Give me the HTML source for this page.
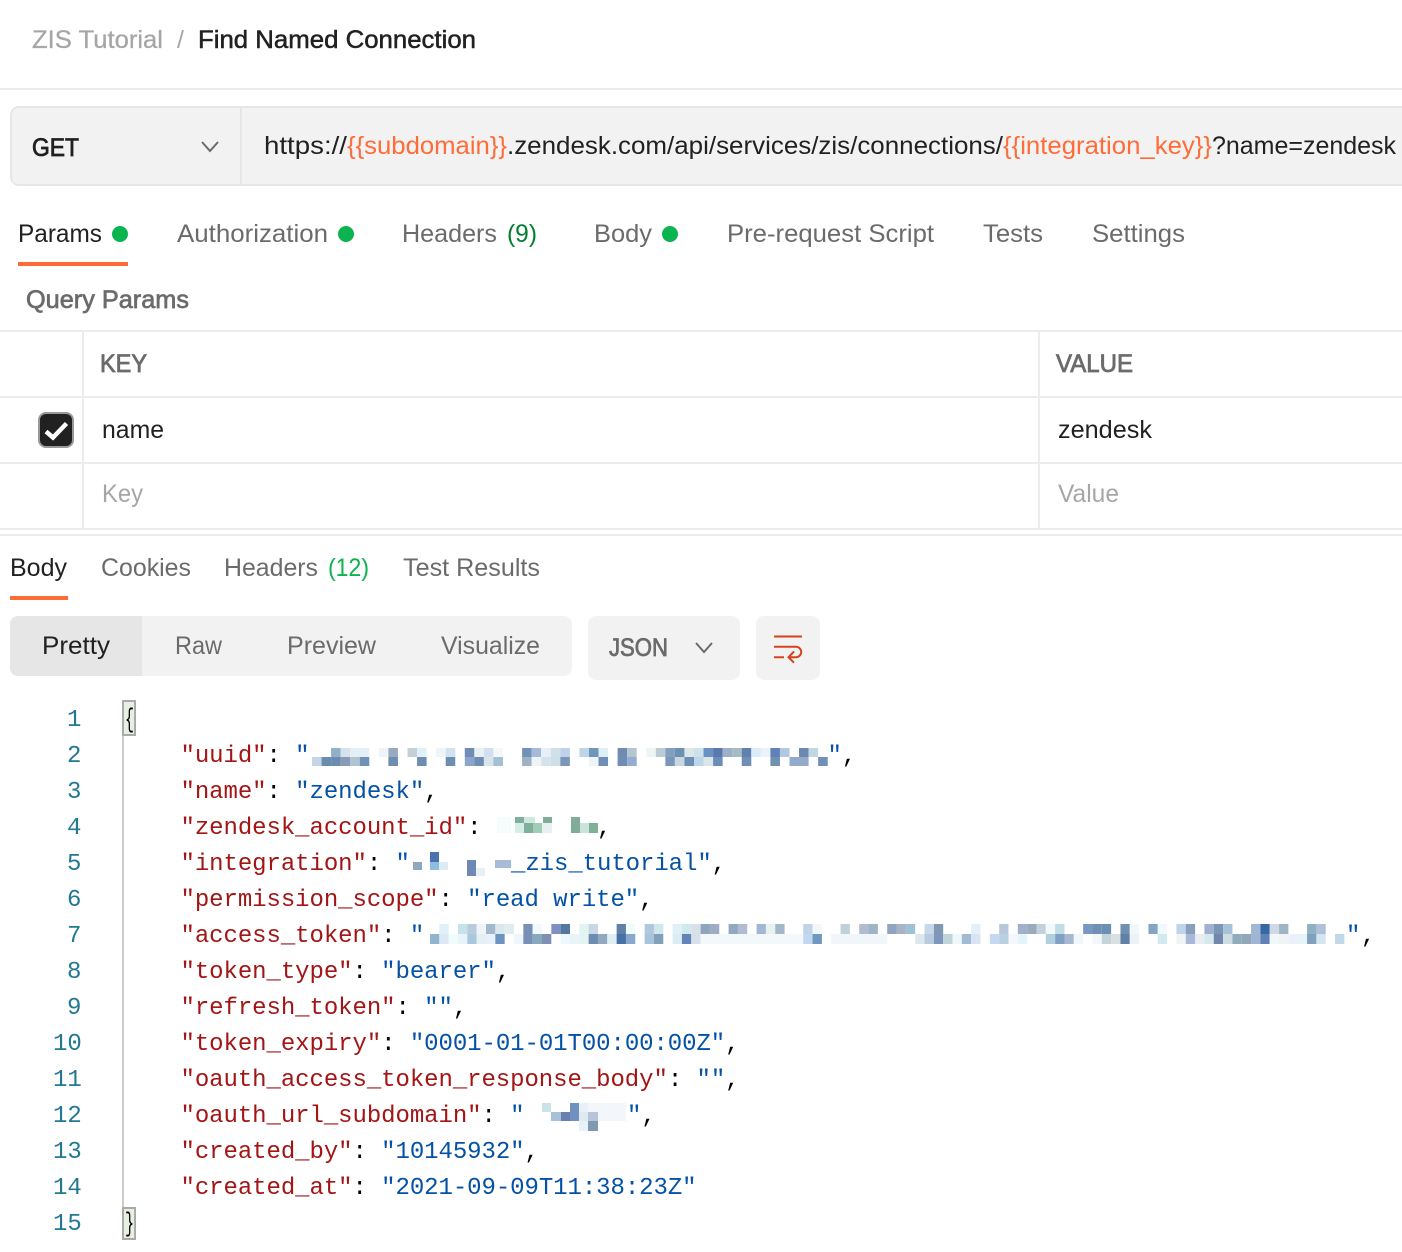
<!DOCTYPE html>
<html><head><meta charset="utf-8"><style>
html,body{margin:0;padding:0;background:#fff;width:1402px;height:1252px;overflow:hidden}
svg{display:block}
.s{font-family:"Liberation Sans",sans-serif;font-size:25px;fill:#6b6b6b}
.d{fill:#212121}
.m{font-family:"Liberation Mono",monospace;font-size:24px;white-space:pre;fill:#000;letter-spacing:-.07px}
.n{fill:#237893}
.k{fill:#a31515}
.v{fill:#0451a5}
.o{fill:#ff6c37}
</style></head><body>
<svg width="1402" height="1252" viewBox="0 0 1402 1252" xmlns="http://www.w3.org/2000/svg">
<rect width="1402" height="1252" fill="#fff"/>
<text class="s" x="32" y="48" textLength="131" lengthAdjust="spacingAndGlyphs" style="fill:#a6a6a6" stroke="#a6a6a6" stroke-width=".3">ZIS Tutorial</text>
<text class="s" x="177" y="48" style="fill:#a6a6a6">/</text>
<text class="s d" x="198" y="48" textLength="278" lengthAdjust="spacingAndGlyphs" stroke="#212121" stroke-width=".5">Find Named Connection</text>
<rect y="88" width="1402" height="2" fill="#ececec"/>

<rect x="11" y="107" width="1420" height="78" rx="8" fill="#f2f2f2" stroke="#e6e6e6" stroke-width="2"/>
<rect x="240" y="107" width="2" height="78" fill="#e6e6e6"/>
<text class="s d" x="32" y="156" textLength="47" lengthAdjust="spacingAndGlyphs" stroke="#212121" stroke-width=".8">GET</text>
<path d="M202 142l8 9 8-9" fill="none" stroke="#6b6b6b" stroke-width="2"/>
<text class="s d" x="264" y="154" textLength="83" lengthAdjust="spacingAndGlyphs">https://</text>
<text class="s o" x="347" y="154" textLength="160" lengthAdjust="spacingAndGlyphs">{{subdomain}}</text>
<text class="s d" x="507" y="154" textLength="496" lengthAdjust="spacingAndGlyphs">.zendesk.com/api/services/zis/connections/</text>
<text class="s o" x="1003" y="154" textLength="209" lengthAdjust="spacingAndGlyphs">{{integration_key}}</text>
<text class="s d" x="1212" y="154" textLength="184" lengthAdjust="spacingAndGlyphs">?name=zendesk</text>

<text class="s d" x="18" y="242" textLength="84" lengthAdjust="spacingAndGlyphs">Params</text>
<circle cx="120" cy="234" r="8" fill="#0cb44f"/>
<text class="s" x="177" y="242" textLength="151" lengthAdjust="spacingAndGlyphs">Authorization</text>
<circle cx="346" cy="234" r="8" fill="#0cb44f"/>
<text class="s" x="402" y="242" textLength="95" lengthAdjust="spacingAndGlyphs">Headers</text>
<text class="s" x="507" y="242" textLength="30" lengthAdjust="spacingAndGlyphs" style="fill:#007f31">(9)</text>
<text class="s" x="594" y="242" textLength="58" lengthAdjust="spacingAndGlyphs">Body</text>
<circle cx="670" cy="234" r="8" fill="#0cb44f"/>
<text class="s" x="727" y="242" textLength="207" lengthAdjust="spacingAndGlyphs">Pre-request Script</text>
<text class="s" x="983" y="242" textLength="60" lengthAdjust="spacingAndGlyphs">Tests</text>
<text class="s" x="1092" y="242" textLength="93" lengthAdjust="spacingAndGlyphs">Settings</text>
<rect x="18" y="262" width="110" height="4" fill="#ff6c37"/>
<text class="s" x="26" y="308" textLength="163" lengthAdjust="spacingAndGlyphs" stroke="#6b6b6b" stroke-width=".7">Query Params</text>

<g fill="#ececec">
<rect y="330" width="1402" height="2"/><rect y="396" width="1402" height="2"/><rect y="462" width="1402" height="2"/><rect y="528" width="1402" height="2"/><rect y="534" width="1402" height="2"/>
<rect x="82" y="330" width="2" height="200"/><rect x="1038" y="330" width="2" height="200"/>
</g>
<text class="s" x="100" y="372" textLength="47" lengthAdjust="spacingAndGlyphs" stroke="#6b6b6b" stroke-width=".8">KEY</text>
<text class="s" x="1056" y="372" textLength="77" lengthAdjust="spacingAndGlyphs" stroke="#6b6b6b" stroke-width=".8">VALUE</text>
<rect x="39" y="413" width="34" height="34" rx="7" fill="#212121" stroke="#999" stroke-width="2"/>
<path d="M46 431.500l7 6 13.500-14" fill="none" stroke="#fff" stroke-width="4.500"/>
<text class="s d" x="102" y="438" textLength="62" lengthAdjust="spacingAndGlyphs">name</text>
<text class="s d" x="1058" y="438" textLength="94" lengthAdjust="spacingAndGlyphs">zendesk</text>
<text class="s" x="102" y="502" textLength="41" lengthAdjust="spacingAndGlyphs" style="fill:#a6a6a6">Key</text>
<text class="s" x="1058" y="502" textLength="61" lengthAdjust="spacingAndGlyphs" style="fill:#a6a6a6">Value</text>

<text class="s d" x="10" y="576" textLength="57" lengthAdjust="spacingAndGlyphs">Body</text>
<text class="s" x="101" y="576" textLength="90" lengthAdjust="spacingAndGlyphs">Cookies</text>
<text class="s" x="224" y="576" textLength="94" lengthAdjust="spacingAndGlyphs">Headers</text>
<text class="s" x="328" y="576" textLength="41" lengthAdjust="spacingAndGlyphs" style="fill:#0cb44f">(12)</text>
<text class="s" x="403" y="576" textLength="137" lengthAdjust="spacingAndGlyphs">Test Results</text>
<rect x="10" y="596" width="58" height="4" fill="#ff6c37"/>

<rect x="10" y="616" width="562" height="60" rx="8" fill="#f2f2f2"/>
<path d="M18 616h124v60h-124a8 8 0 0 1-8-8v-44a8 8 0 0 1 8-8z" fill="#e6e6e6"/>
<text class="s d" x="42" y="654" textLength="68" lengthAdjust="spacingAndGlyphs">Pretty</text>
<text class="s" x="175" y="654" textLength="47" lengthAdjust="spacingAndGlyphs">Raw</text>
<text class="s" x="287" y="654" textLength="89" lengthAdjust="spacingAndGlyphs">Preview</text>
<text class="s" x="441" y="654" textLength="99" lengthAdjust="spacingAndGlyphs">Visualize</text>
<rect x="588" y="616" width="152" height="64" rx="8" fill="#f2f2f2"/>
<text class="s" x="609" y="656" textLength="59" lengthAdjust="spacingAndGlyphs" stroke="#6b6b6b" stroke-width=".8">JSON</text>
<path d="M696 643l8 9 8-9" fill="none" stroke="#6b6b6b" stroke-width="2"/>
<rect x="756" y="616" width="64" height="64" rx="8" fill="#f2f2f2"/>
<path d="M774 636.500h28M774 646.800h22a5.200 5.200 0 0 1 0 10.400h-7M774 657.200h10M794 651.500l-5.500 5.700 5.500 5.500" fill="none" stroke="#d4441c" stroke-width="2"/>

<rect x="122" y="735" width="2" height="473" fill="#ccc"/>
<rect x="123" y="701" width="12" height="34" fill="#e8f0e4" stroke="#aaa" stroke-width="2"/>
<rect x="123" y="1208" width="12" height="31" fill="#e8f0e4" stroke="#aaa" stroke-width="2"/>

<g class="m">
<text class="m n" x="67" y="726">1</text>
<text class="m n" x="67" y="762">2</text>
<text class="m n" x="67" y="798">3</text>
<text class="m n" x="67" y="834">4</text>
<text class="m n" x="67" y="870">5</text>
<text class="m n" x="67" y="906">6</text>
<text class="m n" x="67" y="942">7</text>
<text class="m n" x="67" y="978">8</text>
<text class="m n" x="67" y="1014">9</text>
<text class="m n" x="53" y="1050">10</text>
<text class="m n" x="53" y="1086">11</text>
<text class="m n" x="53" y="1122">12</text>
<text class="m n" x="53" y="1158">13</text>
<text class="m n" x="53" y="1194">14</text>
<text class="m n" x="53" y="1230">15</text>
<text class="m" x="125" y="727" textLength="9" lengthAdjust="spacingAndGlyphs" style="font-size:27px">{</text>
<text class="m" x="125" y="1231" textLength="9" lengthAdjust="spacingAndGlyphs" style="font-size:27px">}</text>
<text class="m" x="180.500" y="762"><tspan class="k">"uuid"</tspan>: <tspan class="v">"</tspan></text>
<text class="m" x="827.500" y="762"><tspan class="v">"</tspan>,</text>
<text class="m" x="180.500" y="798"><tspan class="k">"name"</tspan>: <tspan class="v">"zendesk"</tspan>,</text>
<text class="m" x="180.500" y="834"><tspan class="k">"zendesk_account_id"</tspan>:</text>
<text class="m" x="597" y="834">,</text>
<text class="m" x="180.500" y="870"><tspan class="k">"integration"</tspan>: <tspan class="v">"</tspan></text>
<text class="m" x="511" y="870"><tspan class="v">_zis_tutorial"</tspan>,</text>
<text class="m" x="180.500" y="906"><tspan class="k">"permission_scope"</tspan>: <tspan class="v">"read write"</tspan>,</text>
<text class="m" x="180.500" y="942"><tspan class="k">"access_token"</tspan>: <tspan class="v">"</tspan></text>
<text class="m" x="1346" y="942"><tspan class="v">"</tspan></text>
<text class="m" x="1361" y="942">,</text>
<text class="m" x="180.500" y="978"><tspan class="k">"token_type"</tspan>: <tspan class="v">"bearer"</tspan>,</text>
<text class="m" x="180.500" y="1014"><tspan class="k">"refresh_token"</tspan>: <tspan class="v">""</tspan>,</text>
<text class="m" x="180.500" y="1050"><tspan class="k">"token_expiry"</tspan>: <tspan class="v">"0001-01-01T00:00:00Z"</tspan>,</text>
<text class="m" x="180.500" y="1086"><tspan class="k">"oauth_access_token_response_body"</tspan>: <tspan class="v">""</tspan>,</text>
<text class="m" x="180.500" y="1122"><tspan class="k">"oauth_url_subdomain"</tspan>: <tspan class="v">"</tspan></text>
<text class="m" x="627" y="1122"><tspan class="v">"</tspan>,</text>
<text class="m" x="180.500" y="1158"><tspan class="k">"created_by"</tspan>: <tspan class="v">"10145932"</tspan>,</text>
<text class="m" x="180.500" y="1194"><tspan class="k">"created_at"</tspan>: <tspan class="v">"2021-09-09T11:38:23Z"</tspan></text>
</g>

<!-- uuid blur -->
<g transform="translate(312,748) scale(9.550,9)">
<rect x="2" width="1" height="1" fill="#8fb0c8"/><rect x="3" width="1" height="1" fill="#d5e3ee"/><rect x="4" width="2" height="1" fill="#e3eef5"/><rect x="7" width="1" height="1" fill="#eef4f7"/><rect x="8" width="1" height="1" fill="#97aac2"/><rect x="10" width="1" height="1" fill="#c4d0d4"/><rect x="11" width="1" height="1" fill="#e0f0f7"/><rect x="13" width="1" height="1" fill="#eef5f9"/><rect x="14" width="1" height="1" fill="#d2e3ef"/><rect x="16" width="1" height="1" fill="#6f8db5"/><rect x="17" width="1" height="1" fill="#e8f0f7"/><rect x="18" width="1" height="1" fill="#d3dfee"/><rect x="19" width="1" height="1" fill="#f2f8fb"/><rect x="22" width="1" height="1" fill="#7092b8"/><rect x="23" width="1" height="1" fill="#a5bad8"/><rect x="24" width="1" height="1" fill="#e8f0f5"/><rect x="25" width="1" height="1" fill="#d0dfe8"/><rect x="26" width="1" height="1" fill="#bdd2e8"/><rect x="28" width="1" height="1" fill="#bdd5ea"/><rect x="29" width="1" height="1" fill="#6f96b8"/><rect x="30" width="1" height="1" fill="#e0eef6"/><rect x="32" width="1" height="1" fill="#6f8bb0"/><rect x="33" width="1" height="1" fill="#b5c5d0"/><rect x="35" width="1" height="1" fill="#eef5f7"/><rect x="36" width="1" height="1" fill="#bdcbd5"/><rect x="37" width="1" height="1" fill="#84a0c0"/><rect x="38" width="1" height="1" fill="#6f90b5"/><rect x="39" width="1" height="1" fill="#dce8e8"/><rect x="40" width="1" height="1" fill="#cfe0ef"/><rect x="41" width="1" height="1" fill="#6a92c0"/><rect x="42" width="1" height="1" fill="#5878ae"/><rect x="43" width="1" height="1" fill="#9db0c8"/><rect x="44" width="1" height="1" fill="#a5bcc4"/><rect x="45" width="1" height="1" fill="#6080ae"/><rect x="46" width="1" height="1" fill="#dcecf8"/><rect x="47" width="1" height="1" fill="#eaf2fa"/><rect x="48" width="1" height="1" fill="#5f80b8"/><rect x="49" width="1" height="1" fill="#b0c8e0"/><rect x="51" width="1" height="1" fill="#6c88ae"/><rect x="52" width="1" height="1" fill="#c0d8e4"/>
<rect x="0" y="1" width="1" height="1" fill="#c5d5e5"/><rect x="1" y="1" width="1" height="1" fill="#6a8cb0"/><rect x="2" y="1" width="1" height="1" fill="#6a8cb0"/><rect x="3" y="1" width="1" height="1" fill="#8a9bb8"/><rect x="4" y="1" width="1" height="1" fill="#b0c4d0"/><rect x="5" y="1" width="1" height="1" fill="#7090b5"/><rect x="8" y="1" width="1" height="1" fill="#6f8db0"/><rect x="11" y="1" width="1" height="1" fill="#6f8db0"/><rect x="14" y="1" width="1" height="1" fill="#6f8db0"/><rect x="16" y="1" width="1" height="1" fill="#8aa5c8"/><rect x="17" y="1" width="1" height="1" fill="#6f8db5"/><rect x="18" y="1" width="1" height="1" fill="#d8e5ea"/><rect x="19" y="1" width="1" height="1" fill="#a5bfd2"/><rect x="22" y="1" width="1" height="1" fill="#9db2c4"/><rect x="23" y="1" width="1" height="1" fill="#eef4f8"/><rect x="24" y="1" width="1" height="1" fill="#d4e2ec"/><rect x="25" y="1" width="1" height="1" fill="#cfdfe8"/><rect x="26" y="1" width="1" height="1" fill="#7b96b8"/><rect x="29" y="1" width="1" height="1" fill="#eef5f8"/><rect x="30" y="1" width="1" height="1" fill="#6f8db5"/><rect x="32" y="1" width="1" height="1" fill="#6f8db5"/><rect x="33" y="1" width="1" height="1" fill="#93aed0"/><rect x="37" y="1" width="1" height="1" fill="#7a97b8"/><rect x="38" y="1" width="1" height="1" fill="#c8d8e0"/><rect x="39" y="1" width="1" height="1" fill="#6f90b5"/><rect x="40" y="1" width="1" height="1" fill="#bcd8e8"/><rect x="41" y="1" width="1" height="1" fill="#dae6e8"/><rect x="42" y="1" width="1" height="1" fill="#6a8cb8"/><rect x="45" y="1" width="1" height="1" fill="#6f8db5"/><rect x="48" y="1" width="1" height="1" fill="#6f90b0"/><rect x="50" y="1" width="2" height="1" fill="#93aac8"/><rect x="53" y="1" width="1" height="1" fill="#6f90b8"/>
</g>
<!-- account id blur -->
<g>
<rect x="497" y="817" width="14" height="16" fill="#f6fbfb"/>
<rect x="515" y="817" width="9" height="6" fill="#80b09c"/><rect x="524" y="817" width="11" height="6" fill="#d0e8e0"/><rect x="543" y="817" width="9" height="6" fill="#80ac98"/><rect x="571" y="817" width="9" height="6" fill="#80ac98"/>
<rect x="515" y="823" width="9" height="10" fill="#d8ece8"/><rect x="524" y="823" width="9" height="10" fill="#80b09c"/><rect x="533" y="823" width="9" height="10" fill="#a0ccb8"/><rect x="542" y="823" width="10" height="10" fill="#e8f0f0"/><rect x="571" y="823" width="9" height="10" fill="#80ac98"/><rect x="580" y="823" width="9" height="10" fill="#c8e4dc"/><rect x="589" y="823" width="9" height="10" fill="#80b098"/>
</g>
<!-- integration blur -->
<g>
<rect x="413" y="862" width="9" height="8" fill="#90a8bc"/><rect x="430" y="852" width="9" height="10" fill="#4a72b0"/><rect x="430" y="862" width="9" height="8" fill="#90bce0"/><rect x="439" y="862" width="9" height="8" fill="#dcecf4"/><rect x="467" y="860" width="9" height="16" fill="#7088b4"/><rect x="476" y="868" width="9" height="8" fill="#e8f0f4"/><rect x="495" y="860" width="16" height="8" fill="#a8bcd8"/>
</g>
<!-- token blur -->
<g transform="translate(420.700,924) scale(9.330,10)">
<rect x="2" width="1" height="1" fill="#e0f0f7"/><rect x="4" width="1" height="1" fill="#c8e2ea"/><rect x="5" width="1" height="1" fill="#b8ccdc"/><rect x="6" width="1" height="1" fill="#f0f4f8"/><rect x="7" width="1" height="1" fill="#a0b8cc"/><rect x="8" width="1" height="1" fill="#d8e8ec"/><rect x="9" width="1" height="1" fill="#e0ecf0"/><rect x="11" width="1" height="1" fill="#7890b8"/><rect x="12" width="1" height="1" fill="#f0fafc"/><rect x="14" width="1" height="1" fill="#8090c0"/><rect x="15" width="1" height="1" fill="#5078a0"/><rect x="17" width="1" height="1" fill="#e0f4f0"/><rect x="18" width="1" height="1" fill="#c8d8e8"/><rect x="21" width="1" height="1" fill="#6080a8"/><rect x="22" width="1" height="1" fill="#f0fcfc"/><rect x="24" width="1" height="1" fill="#b0c8dc"/><rect x="25" width="1" height="1" fill="#d0e8ec"/><rect x="27" width="1" height="1" fill="#e0f0f8"/><rect x="28" width="1" height="1" fill="#d0e8f0"/><rect x="29" width="1" height="1" fill="#d8e0ea"/><rect x="30" width="1" height="1" fill="#90a4bc"/><rect x="31" width="1" height="1" fill="#a0acc4"/><rect x="33" width="1" height="1" fill="#90a8c0"/><rect x="34" width="1" height="1" fill="#b0bcd0"/><rect x="36" width="1" height="1" fill="#a0b8d4"/><rect x="37" width="1" height="1" fill="#e8f0f0"/><rect x="38" width="1" height="1" fill="#a0b8c8"/><rect x="41" width="1" height="1" fill="#c0d4e8"/><rect x="42" width="1" height="1" fill="#f0f8fc"/><rect x="45" width="1" height="1" fill="#c0d0dc"/><rect x="47" width="1" height="1" fill="#b0bcd0"/><rect x="48" width="1" height="1" fill="#a0b4c8"/><rect x="50" width="1" height="1" fill="#90a4c4"/><rect x="51" width="1" height="1" fill="#a8b4c4"/><rect x="52" width="1" height="1" fill="#a0c0d8"/><rect x="54" width="1" height="1" fill="#c8d8ec"/><rect x="55" width="1" height="1" fill="#8098b0"/><rect x="59" width="1" height="1" fill="#e4f0f8"/><rect x="62" width="1" height="1" fill="#b8c8dc"/><rect x="64" width="1" height="1" fill="#a0b0cc"/><rect x="65" width="1" height="1" fill="#98acbc"/><rect x="66" width="1" height="1" fill="#c4d0dc"/><rect x="67" width="1" height="1" fill="#f0fafc"/><rect x="68" width="1" height="1" fill="#c0dce4"/><rect x="71" width="1" height="1" fill="#7898c4"/><rect x="72" width="1" height="1" fill="#7090b4"/><rect x="73" width="1" height="1" fill="#6c90b4"/><rect x="75" width="1" height="1" fill="#7090b0"/><rect x="76" width="1" height="1" fill="#f0f8f8"/><rect x="78" width="1" height="1" fill="#84a4c4"/><rect x="79" width="1" height="1" fill="#f0fafc"/><rect x="81" width="1" height="1" fill="#c0d4ec"/><rect x="82" width="1" height="1" fill="#88a0bc"/><rect x="84" width="1" height="1" fill="#a0b0d0"/><rect x="85" width="1" height="1" fill="#7c94b8"/><rect x="86" width="1" height="1" fill="#a8c0d8"/><rect x="89" width="1" height="1" fill="#a0b8d4"/><rect x="90" width="1" height="1" fill="#3868a4"/><rect x="91" width="1" height="1" fill="#d0d8e4"/><rect x="92" width="1" height="1" fill="#a0b4c8"/><rect x="95" width="1" height="1" fill="#90b0c4"/><rect x="96" width="1" height="1" fill="#b0c0d8"/>
<rect x="1" y="1" width="1" height="1" fill="#90b4d0"/><rect x="2" y="1" width="1" height="1" fill="#dce8f4"/><rect x="3" y="1" width="1" height="1" fill="#f0fcfc"/><rect x="4" y="1" width="1" height="1" fill="#e8f4fc"/><rect x="5" y="1" width="1" height="1" fill="#a8c8e0"/><rect x="6" y="1" width="1" height="1" fill="#e4f0f4"/><rect x="7" y="1" width="1" height="1" fill="#e8f0fc"/><rect x="8" y="1" width="1" height="1" fill="#6c94c0"/><rect x="10" y="1" width="1" height="1" fill="#ecf6fc"/><rect x="11" y="1" width="1" height="1" fill="#7890b8"/><rect x="12" y="1" width="1" height="1" fill="#88a8c0"/><rect x="13" y="1" width="1" height="1" fill="#8090b0"/><rect x="15" y="1" width="1" height="1" fill="#ecf8fc"/><rect x="16" y="1" width="1" height="1" fill="#e8f4f8"/><rect x="17" y="1" width="1" height="1" fill="#e4f4f4"/><rect x="18" y="1" width="1" height="1" fill="#6c8cb0"/><rect x="19" y="1" width="1" height="1" fill="#90a8c0"/><rect x="20" y="1" width="1" height="1" fill="#e0eef4"/><rect x="21" y="1" width="1" height="1" fill="#4870a8"/><rect x="22" y="1" width="1" height="1" fill="#88a8cc"/><rect x="24" y="1" width="1" height="1" fill="#a8c4dc"/><rect x="25" y="1" width="1" height="1" fill="#80a0bc"/><rect x="27" y="1" width="1" height="1" fill="#dcecf4"/><rect x="28" y="1" width="1" height="1" fill="#6484b8"/><rect x="29" y="1" width="1" height="1" fill="#d8e0ec"/><rect x="30" y="1" width="11" height="1" fill="#f3f8fb"/><rect x="41" y="1" width="1" height="1" fill="#c0d8f0"/><rect x="42" y="1" width="1" height="1" fill="#7098c0"/><rect x="44" y="1" width="6" height="1" fill="#f1f6fb"/><rect x="53" y="1" width="1" height="1" fill="#dce8ec"/><rect x="54" y="1" width="1" height="1" fill="#b8cce0"/><rect x="55" y="1" width="1" height="1" fill="#7c98bc"/><rect x="56" y="1" width="1" height="1" fill="#c0d4dc"/><rect x="57" y="1" width="1" height="1" fill="#eef8f8"/><rect x="58" y="1" width="1" height="1" fill="#a0bcd4"/><rect x="59" y="1" width="1" height="1" fill="#d8e4f4"/><rect x="61" y="1" width="1" height="1" fill="#c4d8f0"/><rect x="62" y="1" width="1" height="1" fill="#b8d0e0"/><rect x="63" y="1" width="1" height="1" fill="#f4f8fc"/><rect x="64" y="1" width="1" height="1" fill="#e4f4fc"/><rect x="67" y="1" width="1" height="1" fill="#b0d0e0"/><rect x="68" y="1" width="1" height="1" fill="#80a0c4"/><rect x="69" y="1" width="1" height="1" fill="#a8b8d0"/><rect x="70" y="1" width="1" height="1" fill="#f0f6fc"/><rect x="72" y="1" width="1" height="1" fill="#f4f6fc"/><rect x="73" y="1" width="1" height="1" fill="#c4d4d8"/><rect x="74" y="1" width="1" height="1" fill="#d8e0e4"/><rect x="75" y="1" width="1" height="1" fill="#6080a8"/><rect x="76" y="1" width="1" height="1" fill="#eef2f8"/><rect x="79" y="1" width="1" height="1" fill="#d4e8f0"/><rect x="81" y="1" width="1" height="1" fill="#f0f4f4"/><rect x="82" y="1" width="1" height="1" fill="#a8b8d8"/><rect x="83" y="1" width="1" height="1" fill="#e8eef0"/><rect x="84" y="1" width="1" height="1" fill="#d8e8f0"/><rect x="85" y="1" width="1" height="1" fill="#7088ac"/><rect x="86" y="1" width="1" height="1" fill="#d0dce4"/><rect x="87" y="1" width="1" height="1" fill="#90acbc"/><rect x="88" y="1" width="1" height="1" fill="#90a8b8"/><rect x="89" y="1" width="1" height="1" fill="#a0b4d4"/><rect x="90" y="1" width="1" height="1" fill="#6080b8"/><rect x="91" y="1" width="1" height="1" fill="#f0f8fc"/><rect x="92" y="1" width="1" height="1" fill="#f0f4f8"/><rect x="93" y="1" width="1" height="1" fill="#ecf0fa"/><rect x="94" y="1" width="1" height="1" fill="#e4f4fa"/><rect x="95" y="1" width="1" height="1" fill="#80a0bc"/><rect x="96" y="1" width="1" height="1" fill="#d4e4f0"/><rect x="98" y="1" width="1" height="1" fill="#c0d8e8"/>
</g>
<!-- subdomain blur -->
<g>
<rect x="588" y="1103" width="38" height="18" fill="#f3f7fb"/>
<rect x="542" y="1103" width="9" height="9" fill="#c8e4e8"/><rect x="551" y="1112" width="10" height="9" fill="#a8c0d8"/><rect x="561" y="1112" width="9" height="9" fill="#6880b0"/><rect x="570" y="1103" width="9" height="18" fill="#7090c0"/><rect x="579" y="1103" width="9" height="9" fill="#e8f0f8"/><rect x="579" y="1112" width="9" height="9" fill="#e0e8f0"/><rect x="588" y="1112" width="10" height="9" fill="#b8c4d8"/><rect x="588" y="1121" width="10" height="10" fill="#8098b0"/><rect x="579" y="1121" width="9" height="10" fill="#e8f0f8"/>
</g>
</svg>
</body></html>
